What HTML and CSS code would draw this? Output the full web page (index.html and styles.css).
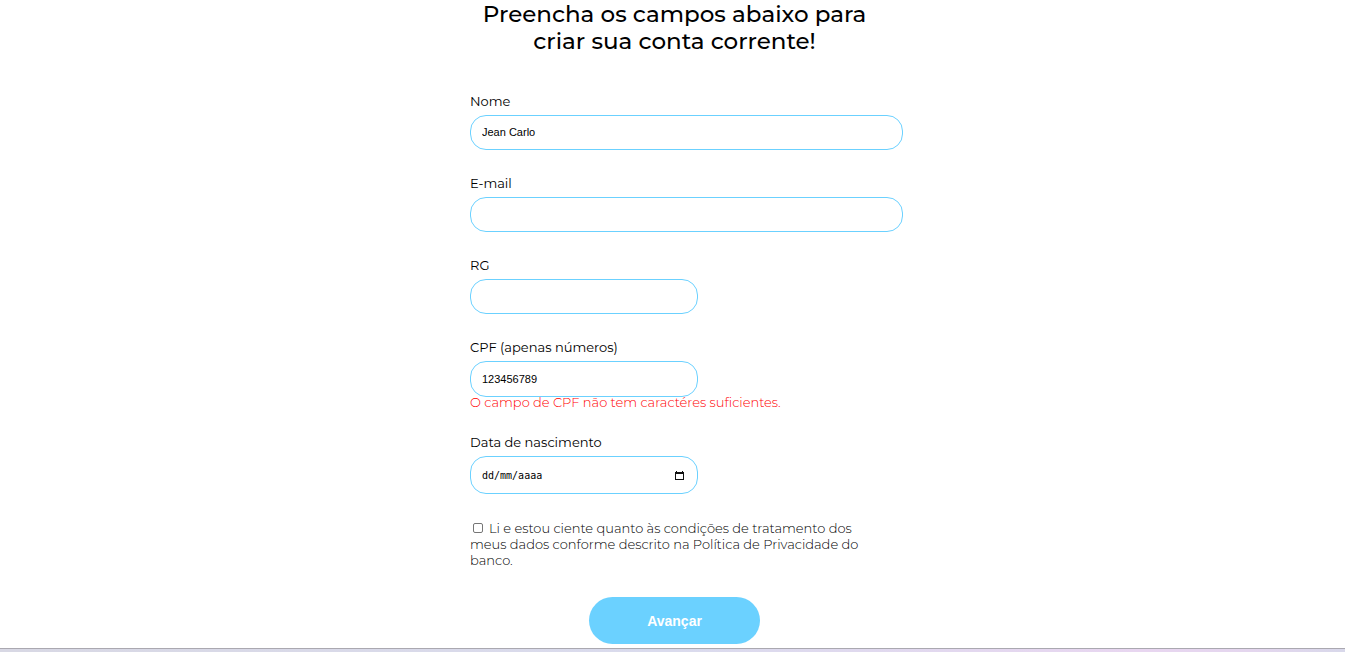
FILE: index.html
```html
<!DOCTYPE html>
<html lang="pt-BR">
<head>
<meta charset="utf-8">
<meta name="viewport" content="width=device-width, initial-scale=1">
<title>Criar conta corrente</title>
<link rel="stylesheet" href="styles.css">
</head>
<body>
<main class="page">
  <form class="form">
    <h1 class="title">Preencha os campos abaixo para criar sua conta corrente!</h1>
    <div class="field">
      <label class="label" for="nome">Nome</label>
      <input class="input" id="nome" type="text" value="Jean Carlo">
    </div>
    <div class="field">
      <label class="label" for="email">E-mail</label>
      <input class="input" id="email" type="email">
    </div>
    <div class="field">
      <label class="label" for="rg">RG</label>
      <input class="input input-short" id="rg" type="text">
    </div>
    <div class="field">
      <label class="label" for="cpf">CPF (apenas números)</label>
      <input class="input input-short input-cpf" id="cpf" type="text" value="123456789" aria-describedby="cpf-erro">
      <span class="error" id="cpf-erro">O campo de CPF não tem caractéres suficientes.</span>
    </div>
    <div class="field">
      <label class="label" for="nascimento">Data de nascimento</label>
      <div class="input input-short date">
        <input class="date-text" id="nascimento" type="text" placeholder="dd/mm/aaaa">
        <button class="date-button" type="button" aria-label="Abrir calendário">
          <svg width="9" height="9" viewBox="0 0 9 9"><path d="M1 0h1v1h5V0h1v1h1v8H0V1h1zM1 3v5h7V3z" fill="#111" fill-rule="evenodd"/></svg>
        </button>
      </div>
    </div>
    <label class="terms"><input class="check" type="checkbox">Li e estou ciente quanto às condições de tratamento dos meus dados conforme descrito na Política de Privacidade do banco.</label>
    <button class="submit" type="submit">Avançar</button>
  </form>
</main>
<footer class="footer"></footer>
</body>
</html>
```
FILE: styles.css
```css
* { box-sizing: border-box; }
body {
  margin: 0;
  min-height: 100vh;
  display: flex;
  flex-direction: column;
  background: #fff;
  color: #000;
  font-family: Montserrat, Inter, sans-serif;
  font-size: 13px;
  line-height: 16px;
}
.page {
  flex: 1;
  display: flex;
  justify-content: center;
  padding: 0 12px 4px 16px;
}
.form {
  width: 100%;
  max-width: 409px;
  display: flex;
  flex-direction: column;
}
.title {
  margin: 0 0 38px;
  padding-top: 1px;
  font-size: 23px;
  font-weight: 500;
  line-height: 27px;
  text-align: center;
}
.field {
  display: flex;
  flex-direction: column;
  align-items: flex-start;
  margin-bottom: 25px;
}
.label { margin-bottom: 6px; }
.input {
  width: calc(100% + 24px);
  height: 35px;
  padding: 0 11px 1px;
  border: 1px solid #6bd1ff;
  border-radius: 16px;
  background: #fff;
  color: #000;
  font: 11px "Liberation Sans", Arial, sans-serif;
}
.input-short { width: 228px; }
.input-cpf { height: 36px; }
.error { margin-bottom: 2px; color: #f00; font-weight: 300; line-height: 10px; }
.date {
  display: flex;
  align-items: center;
  justify-content: space-between;
  height: 38px;
  padding: 0 13px 0 11px;
}
.date-text {
  flex: 1;
  min-width: 0;
  padding: 0;
  border: 0;
  outline: 0;
  font: 10px "DejaVu Sans Mono", monospace;
}
.date-text::placeholder { color: #000; }
.date-button { display: flex; padding: 0; border: 0; background: none; }
.terms { margin-top: 1px; color: #000; font-weight: 300; }
.check {
  appearance: none;
  width: 10px;
  height: 10px;
  margin: 0 6px 0 3px;
  border: 1px solid #767676;
  border-radius: 2px;
  background: #fff;
}
.submit {
  align-self: center;
  width: 171px;
  height: 47px;
  margin-top: 29px;
  border: 0;
  border-radius: 24px;
  background: #6bd1ff;
  color: #fff;
  font: bold 14px "Liberation Sans", Arial, sans-serif;
}
.footer {
  height: 4px;
  border-top: 1px solid #aaa8b0;
  background: linear-gradient(90deg, #d8d8e4, #dadbed 50%, #e8d6f0 85%, #e4d6ee 93%, #d8d8ea);
}
```
